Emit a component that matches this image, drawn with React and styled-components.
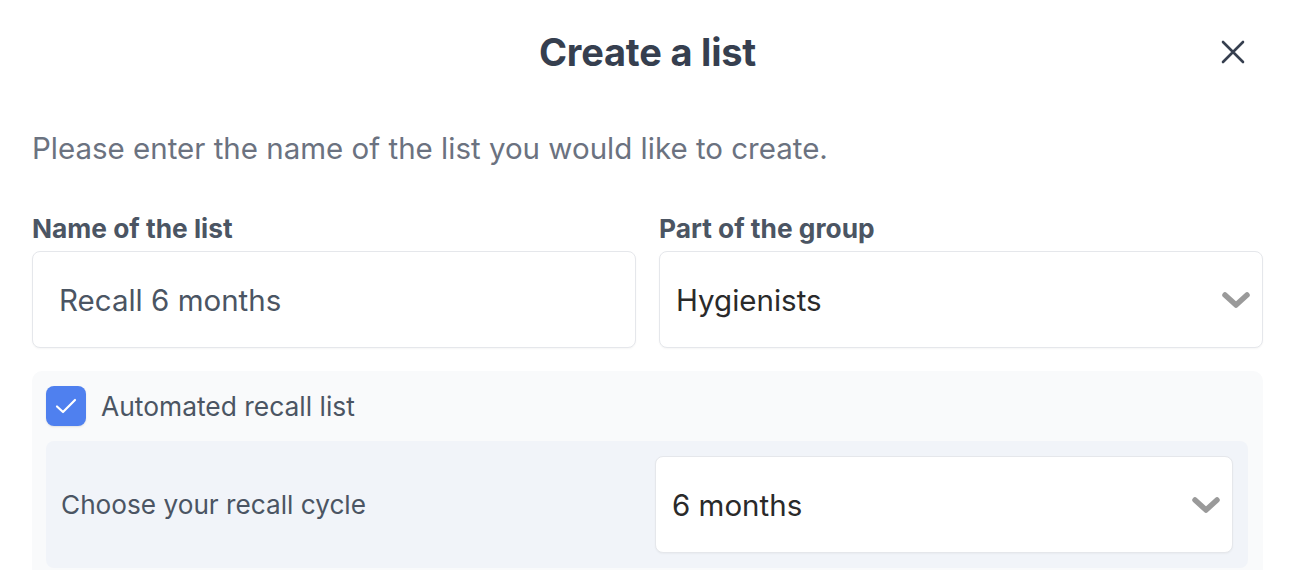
import React from "react";
import styled, { createGlobalStyle } from "styled-components";

const Global = createGlobalStyle`
  html, body { margin: 0; padding: 0; background: #ffffff; }
  body { font-family: Inter, "Noto Sans", sans-serif; -webkit-font-smoothing: antialiased; }
  * { box-sizing: border-box; }
`;

const Modal = styled.div`
  width: 1300px;
  height: 570px;
  overflow: hidden;
  padding: 0 37px 0 32px;
  background: #fff;
`;

const Header = styled.header`
  display: grid;
  grid-template-columns: 1fr auto 1fr;
  align-items: center;
  height: 104px;
`;

const Title = styled.h2`
  grid-column: 2;
  margin: 0;
  font-family: Inter, sans-serif;
  font-weight: 700;
  font-size: 38px;
  letter-spacing: -0.2px;
  color: #363f4f;
`;

const CloseButton = styled.button`
  grid-column: 3;
  justify-self: end;
  width: 60px;
  height: 60px;
  display: flex;
  align-items: center;
  justify-content: center;
  border: none;
  background: transparent;
  padding: 0;
  cursor: pointer;
`;

const Subtitle = styled.p`
  margin: 26px 0 0;
  font-size: 29.5px;
  line-height: 36px;
  color: #6b7280;
`;

const Fields = styled.div`
  display: grid;
  grid-template-columns: 1fr 1fr;
  column-gap: 23px;
  margin-top: 47px;
`;

const Field = styled.div`
  display: flex;
  flex-direction: column;
  gap: 6px;
`;

const Label = styled.label`
  font-weight: 700;
  font-size: 26.3px;
  line-height: 32px;
  color: #4b5563;
`;

const Box = styled.div`
  position: relative;
  height: 97px;
  display: flex;
  align-items: center;
  padding-left: ${(p) => p.$pad || 26}px;
  background: #fff;
  border: 1.5px solid #e5e7eb;
  border-radius: 8px;
  box-shadow: 0 1px 2px rgba(0, 0, 0, 0.04);
  font-size: 29.5px;
  color: ${(p) => p.$color || "#4b5563"};
`;

const Chevron = styled.svg`
  position: absolute;
  right: 11px;
  top: 50%;
  transform: translateY(-50%);
`;

const Panel = styled.section`
  margin-top: 23px;
  background: #f9fafb;
  border-radius: 10px;
  padding: 15px 15px 20px 14px;
`;

const CheckRow = styled.div`
  display: flex;
  align-items: center;
  gap: 15px;
  height: 40px;
`;

const CheckBox = styled.span`
  width: 40px;
  height: 40px;
  border-radius: 8px;
  background: #4f80ef;
  display: flex;
  align-items: center;
  justify-content: center;
  box-shadow: 0 1px 2px rgba(0, 0, 0, 0.1);
`;

const CheckLabel = styled.span`
  font-size: 26.4px;
  color: #4b5563;
`;

const InnerPanel = styled.div`
  margin-top: 15px;
  background: #f1f4f9;
  border-radius: 8px;
  padding: 15px;
  display: grid;
  grid-template-columns: 1fr 1fr;
  column-gap: 16px;
  align-items: center;
`;

const CycleLabel = styled.span`
  font-size: 26.2px;
  color: #4b5563;
`;

const ChevronIcon = () => (
  <Chevron width="30" height="18" viewBox="0 0 30 18">
    <path d="M4 4 L15 14 L26 4" fill="none" stroke="#9a9a9a" strokeWidth="5.5" strokeLinecap="round" strokeLinejoin="round" />
  </Chevron>
);

export default function App() {
  return (
    <>
      <Global />
      <Modal>
        <Header>
          <Title>Create a list</Title>
          <CloseButton aria-label="Close">
            <svg width="26" height="26" viewBox="0 0 26 26">
              <path d="M3 3 L23 23 M23 3 L3 23" stroke="#363f4f" strokeWidth="2.6" strokeLinecap="round" />
            </svg>
          </CloseButton>
        </Header>
        <Subtitle>Please enter the name of the list you would like to create.</Subtitle>
        <Fields>
          <Field>
            <Label>Name of the list</Label>
            <Box>Recall 6 months</Box>
          </Field>
          <Field>
            <Label>Part of the group</Label>
            <Box $pad={16} $color="#2a2a2a">
              Hygienists
              <ChevronIcon />
            </Box>
          </Field>
        </Fields>
        <Panel>
          <CheckRow>
            <CheckBox>
              <svg width="24" height="24" viewBox="0 0 24 24">
                <path d="M3 12.5 L9 18 L21 6" fill="none" stroke="#fff" strokeWidth="2.2" strokeLinecap="round" strokeLinejoin="round" />
              </svg>
            </CheckBox>
            <CheckLabel>Automated recall list</CheckLabel>
          </CheckRow>
          <InnerPanel>
            <CycleLabel>Choose your recall cycle</CycleLabel>
            <Box $pad={16} $color="#2a2a2a">
              6 months
              <ChevronIcon />
            </Box>
          </InnerPanel>
        </Panel>
      </Modal>
    </>
  );
}
